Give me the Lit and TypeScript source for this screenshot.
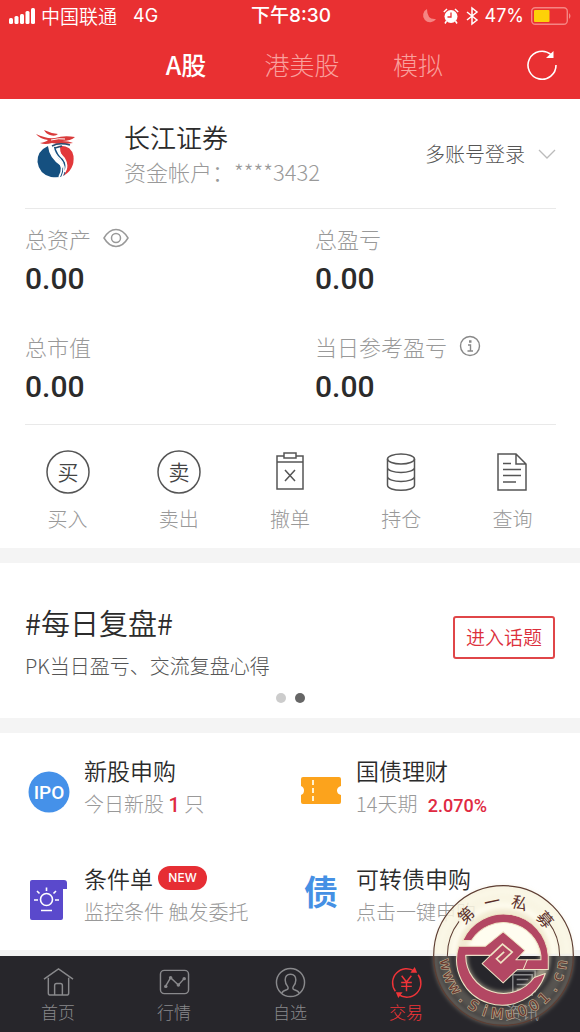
import { LitElement, html, css, svg } from "lit";
import { customElement, state } from "lit/decorators.js";

const actionIcons: Record<string, unknown> = {
  buy: svg`<circle cx="22" cy="22" r="21"/><text class="glyph" x="22" y="30" text-anchor="middle">买</text>`,
  sell: svg`<circle cx="22" cy="22" r="21"/><text class="glyph" x="22" y="30" text-anchor="middle">卖</text>`,
  cancel: svg`<path d="M16 6H9V39H35V6H28M9 12H35M16 3H28V8H16ZM17 20L27 31M27 20L17 31"/>`,
  hold: svg`<ellipse cx="22" cy="9" rx="13.500" ry="5"/><path d="M8.500 9V35C8.500 42 35.500 42 35.500 35V9M8.500 17.500C8.500 24 35.500 24 35.500 17.500M8.500 26.500C8.500 33 35.500 33 35.500 26.500"/>`,
  query: svg`<path d="M8 4H26L36 14V40H8ZM26 4V14H36M13 13.500H21M13 19.500H31M13 25.500H31M13 32H26"/>`,
};

const navIcons: Record<string, unknown> = {
  home: svg`<path d="M1 12.500L16 2L31 12.500M5.500 11V27Q5.500 29 8 29H24Q26.500 29 26.500 27V11M12 29V19Q12 17 14 17H18Q20 17 20 19V29"/>`,
  chart: svg`<rect x="1.500" y="3.500" width="29" height="24" rx="4"/><path d="M7 19.500L12 11L20 18.500L26 12"/><g class="dot"><circle cx="7" cy="20" r="1.800"/><circle cx="12" cy="11" r="1.800"/><circle cx="20" cy="18.500" r="1.800"/><circle cx="26" cy="12" r="1.800"/></g>`,
  user: svg`<circle cx="16" cy="16" r="14.500"/><path d="M7 27Q8 24.500 12 23.500Q14.500 22.500 13 20Q10.500 17 10.500 13.500Q10.500 7.500 16 7.500Q21.500 7.500 21.500 13.500Q21.500 17 19 20Q17.500 22.500 20 23.500Q24 24.500 25 27"/>`,
  trade: svg`<path d="M24.500 4.500A14.500 14.500 0 0 0 4.500 25M8 28.500A14.500 14.500 0 0 0 28 8M11 9L16 15.500L21 9M10.500 16H21.500M10.500 20H21.500M16 15.500V25"/><path class="dot" d="M20 6H27L24.500 0ZM5 26H12L7.500 32Z"/>`,
  news: svg`<path d="M6 8H26V29H6ZM9 4H29V26M10 13H22M10 18H22M10 23H18"/>`,
};

@customElement("trade-watermark")
class TradeWatermark extends LitElement {
  static styles = css`
    :host { display: block; pointer-events: none; }
    svg { display: block; width: 100%; height: auto; overflow: visible; }
    .cn { font: 400 48px "Noto Sans CJK SC", sans-serif; fill: #5b2f2a; }
    .url { font: 400 44px "DejaVu Sans", sans-serif; fill: #6a3a30; stroke: #b9a98c; stroke-width: 4; paint-order: stroke; }
  `;

  /* Letters stand evenly spaced on the lower half of the ring, tops towards its centre. */
  private url() {
    const letters = [..."www.SiMu001.cn"];
    const step = 162 / (letters.length - 1);
    return letters.map((c, i) => {
      const angle = 81 - i * step;
      return svg`<text text-anchor="middle" transform="translate(251 258) rotate(${angle.toFixed(1)})" y="190">${c}</text>`;
    });
  }

  private name() {
    const marks: [string, number][] = [["第", -43], ["一", -12], ["私", 17], ["募", 49]];
    return marks.map(([c, a]) => svg`<text text-anchor="middle" transform="translate(251 258) rotate(${a})" y="-147">${c}</text>`);
  }

  render() {
    return html`<svg viewBox="40 47 422 422" aria-hidden="true">
      <defs>
        <filter id="soft" x="-20%" y="-20%" width="140%" height="140%"><feGaussianBlur stdDeviation="7"/></filter>
        <clipPath id="top"><rect x="30" y="40" width="440" height="213"/></clipPath>
      </defs>
      <g clip-path="url(#top)"><circle cx="251" cy="258" r="210" fill="#fffcec" opacity=".8"/></g>
      <g fill="none" stroke="#e9dfc0" filter="url(#soft)">
        <circle cx="251" cy="258" r="204" stroke-width="12" opacity=".4"/>
        <circle cx="251" cy="258" r="174" stroke-width="36" opacity=".25"/>
        <circle cx="251" cy="258" r="125" stroke-width="32" opacity=".6"/>
      </g>
      <circle cx="251" cy="258" r="209" fill="none" stroke="#5d3d32" stroke-width="3.500"/>
      <path d="M83 262A168 168 0 0 1 118 156M384 156A168 168 0 0 1 419 262" fill="none" stroke="#5d3d32" stroke-width="3"/>
      <g fill="#b34763" stroke="#efe4c5" stroke-width="3" stroke-linejoin="round">
        <path d="M129 213A134 134 0 0 1 385 258V300H300L322 271H363V258A113 113 0 0 0 155 213Z"/>
        <path d="M117 230H197L250 187L315 243L288 271H322L310 300H292L250 340L187 282L213 257H138A113 113 0 0 0 343 324L376 312A134 134 0 0 1 117 230Z"/>
      </g>
      <path d="M213 257L248 224L277 248L243 280L230 268L253 247" fill="none" stroke="#efe4c5" stroke-width="5"/>
      <g class="cn">${this.name()}</g>
      <g class="url">${this.url()}</g>
    </svg>`;
  }
}

@customElement("app-root")
class AppRoot extends LitElement {
  @state() private tab = 0;

  static styles = css`
    :host {
      display: flex; flex-direction: column; position: relative;
      min-height: 100vh; background: #fff; color: #2b2b2b; overflow: hidden;
      font: 300 20px/30px "Noto Sans CJK SC", sans-serif;
    }
    * { box-sizing: border-box; }
    button { font: inherit; color: inherit; background: none; border: 0; padding: 0; margin: 0; cursor: pointer; }
    a { color: inherit; text-decoration: none; }
    svg { display: block; flex: none; overflow: visible; }
    h2, p, dl, dd, dt { margin: 0; font-weight: inherit; font-size: inherit; }
    header { background: #e93032; color: #fff; height: 99px; }
    .status { display: grid; grid-template-columns: 1fr auto 1fr; align-items: center; height: 32px; padding: 0 7px 0 9px; font-size: 18px; line-height: 32px; font-weight: 400; }
    .status div { display: flex; align-items: center; }
    .carrier { gap: 5px; }
    .carrier span { margin-right: 11px; font-size: 19px; font-weight: 350; }
    .latin { font-family: Inter, sans-serif; font-weight: 400; }
    .clock { font: 500 19px/32px Inter, "Noto Sans CJK SC", sans-serif; }
    .battery { justify-content: flex-end; gap: 7px; font-family: Inter, sans-serif; }
    .tabs { display: grid; grid-template-columns: 1fr auto 1fr; align-items: center; height: 66px; padding: 0 23px 0 47px; }
    .tabset { display: grid; grid-template-columns: repeat(3, 116px); grid-column: 2; }
    .tab { font-size: 25px; line-height: 38px; padding-bottom: 2px; color: #f9a09d; }
    .tab.on { color: #fff; font-weight: 500; }
    .refresh { justify-self: end; }

    .account { display: flex; align-items: center; margin: 0 24px 0 25px; height: 110px; border-bottom: 1px solid #e9e9e9; }
    .logo { margin-left: 10px; width: 42px; height: 50px; }
    .who { flex: 1; margin-left: 47px; line-height: 35px; color: #999; font-size: 22px; }
    .who h2 { font-size: 26px; color: #2b2b2b; font-weight: 350; }
    .switch { display: flex; align-items: center; gap: 13px; color: #555; }

    .assets { display: grid; grid-template-columns: 290fr 241fr; row-gap: 28px; margin: 0 24px 0 25px; padding: 9px 0 18px; border-bottom: 1px solid #e9e9e9; }
    .assets dt { display: flex; align-items: center; gap: 12px; height: 40px; line-height: 38px; font-size: 22px; color: #999; }
    .assets dd { height: 40px; font: 500 30px/42px Roboto, sans-serif; }

    .actions { display: grid; grid-template-columns: repeat(5, 1fr); padding: 25px 12px 14px; }
    .action { display: grid; justify-items: center; gap: 10px; color: #999; }
    .action svg { fill: none; stroke: #555; stroke-width: 1.500; }
    .action .glyph { font-size: 21px; fill: #444; stroke: none; font-weight: 350; }
    .band { height: 15px; background: #f4f4f4; flex: none; }

    .topic { display: grid; grid-template-columns: 1fr auto; align-items: center; padding: 38px 25px 15px; }
    .topic h2 { font-size: 29px; line-height: 42px; font-weight: 350; }
    .topic p { line-height: 30px; margin-top: 8px; color: #555; }
    .enter { width: 102px; height: 43px; border: 2px solid #e04648; border-radius: 3px; color: #dc2f3c; font-size: 19px; line-height: 38px; font-weight: 350; margin-top: -8px; }
    .dots { grid-column: 1 / -1; display: flex; justify-content: center; gap: 9px; margin-top: 12px; }
    .dots i { width: 10px; height: 10px; border-radius: 50%; background: #ccc; }
    .dots i.on { background: #666; }

    .services { display: grid; grid-template-columns: 272fr 308fr; row-gap: 40px; padding: 21px 0 20px; }
    .service { display: grid; grid-template-columns: 42px auto; align-items: center; justify-content: start; column-gap: 14px; padding-left: 28px; }
    .service > svg { margin-top: 8px; }
    .service p { line-height: 36px; color: #999; white-space: nowrap; }
    .service h2 { display: flex; align-items: center; gap: 5px; font-size: 23px; line-height: 32px; white-space: nowrap; font-weight: 350; }
    .badge { width: 49px; height: 24px; border-radius: 12px; background: #e62e34; color: #fff; font: 500 12px/24px Inter, sans-serif; text-align: center; }
    .hot { color: #e02a42; font: 500 20px/30px Roboto, sans-serif; }
    .rate { margin-left: 6px; font-size: 18px; }
    .ipo { font: 500 19px Roboto, sans-serif; fill: #fff; }
    .debt { font: 700 34px "Noto Sans CJK SC", sans-serif; fill: #4590e4; }

    nav { display: grid; grid-template-columns: repeat(5, 1fr); background: #27262b; height: 76px; }
    .foot { height: 6px; background: #f2f2f2; margin-top: auto; }
    .item { display: flex; flex-direction: column; align-items: center; padding-top: 11px; color: #89898c; font-size: 17px; line-height: 26px; gap: 1px; }
    .item svg { fill: none; stroke: currentColor; stroke-width: 1.500; }
    .item .dot { fill: currentColor; stroke: none; }
    .item.on { color: #ef3438; }
    .mark { position: absolute; right: 6px; bottom: 6px; width: 141px; }
  `;

  private asset(label: string, icon: unknown = null) {
    return html`<div><dt>${label}${icon}</dt><dd>0.00</dd></div>`;
  }

  private service(icon: unknown, title: unknown, note: unknown) {
    return html`<a class="service" href="#"><svg width="42" height="42" viewBox="0 0 42 42">${icon}</svg><div><h2>${title}</h2><p>${note}</p></div></a>`;
  }

  render() {
    const actions = [["buy", "买入"], ["sell", "卖出"], ["cancel", "撤单"], ["hold", "持仓"], ["query", "查询"]];
    const nav = [["home", "首页"], ["chart", "行情"], ["user", "自选"], ["trade", "交易"], ["news", "资讯"]];
    return html`
      <header>
        <div class="status">
          <div class="carrier">
            <svg width="27" height="16" viewBox="0 0 27 16" fill="#fff"><rect y="10" width="4" height="6" rx="1.500"/><rect x="5.500" y="8" width="4" height="8" rx="1.500"/><rect x="11" y="6" width="4" height="10" rx="1.500"/><rect x="16.500" y="3" width="4" height="13" rx="1.500"/><rect x="22" width="4" height="16" rx="1.500"/></svg>
            <span>中国联通</span><b class="latin">4G</b>
          </div>
          <div class="clock">下午8:30</div>
          <div class="battery">
            <svg width="14" height="16" viewBox="0 0 14 16"><path fill="#f58583" d="M5 1A7 7 0 1 0 14 11Q5 12 5 1Z"/></svg>
            <svg width="16" height="16" viewBox="0 0 16 16"><circle cx="8" cy="8.500" r="6.500" fill="#fff"/><path d="M8 4.500V9H4.500" fill="none" stroke="#e93032" stroke-width="1.300"/><path d="M.8 4L4 1M15.200 4L12 1M3.500 13L2 15.500M12.500 13L14 15.500" stroke="#fff" stroke-width="1.500"/></svg>
            <svg width="12" height="18" viewBox="0 0 12 18"><path d="M1 5L11 13L6 17V1L11 5L1 13" fill="none" stroke="#fff" stroke-width="1.500"/></svg>
            <span>47%</span>
            <svg width="42" height="18" viewBox="0 0 42 18"><rect x=".7" y=".7" width="35.600" height="16.600" rx="3.500" fill="none" stroke="#f58583" stroke-width="1.400"/><rect x="3" y="3" width="15.500" height="12" rx="1" fill="#fdd108"/><path d="M38 6Q41 9 38 12Z" fill="#f58583"/></svg>
          </div>
        </div>
        <div class="tabs">
          <div class="tabset" role="tablist">
            ${["A股", "港美股", "模拟"].map((t, i) => html`<button role="tab" aria-selected=${i === this.tab} class="tab ${i === this.tab ? "on" : ""}" @click=${() => (this.tab = i)}>${t}</button>`)}
          </div>
          <button class="refresh" aria-label="刷新"><svg width="30" height="32" viewBox="0 0 30 32"><path d="M24 5.500A14 14 0 1 0 29 16" fill="none" stroke="#fff" stroke-width="1.600"/><path d="M26.500 2V9H19Z" fill="#fff"/></svg></button>
        </div>
      </header>

      <section class="account">
        <svg class="logo" viewBox="0 0 42 50">
          <path fill="#155080" d="M13 17Q2 22 2.500 33Q4 45 16 48Q24 49 28 47Q31 42 26 37Q14 29 13 17Z"/>
          <path fill="#e2383b" d="M22 17Q36 15 38.500 27Q40 41 27 47.500Q36 38 30 31Q25 26 25 18Z"/>
          <path fill="none" stroke="#155080" stroke-width="2.500" d="M19 18Q21 26 27 31Q32 37 28 46"/>
          <path fill="none" stroke="#fff" stroke-width="1.500" d="M14 16Q16 26 22 31Q30 38 24 48M18 17Q19 25 25 30Q32 37 27 48M22 18Q23 23 29 29Q33 35 30 43"/>
          <path fill="#d93b3b" d="M1 5Q11 10 20 9Q29 6 40 8Q36 12 27 12Q34 12 38 14Q26 16 17 14Q10 16 5 14Q11 13 13 11Q5 10 1 5ZM9 1Q15 4 23 5Q20 8 15 6Q11 5 9 1Z"/>
          <path fill="none" stroke="#fff" stroke-width="1" d="M16 11Q24 9 30 10"/>
          <path fill="none" stroke="#254d70" stroke-width="1.500" d="M17 17Q24 13 35 16M20 19L27 17"/>
        </svg>
        <div class="who"><h2>长江证券</h2><p>资金帐户：****3432</p></div>
        <button class="switch">多账号登录<svg width="18" height="12" viewBox="0 0 18 12"><path d="M1 2L9 10L17 2" fill="none" stroke="#bbb" stroke-width="1.300"/></svg></button>
      </section>

      <dl class="assets">
        ${this.asset("总资产", html`<button aria-label="显示或隐藏"><svg width="26" height="20" viewBox="0 0 26 20" fill="none" stroke="#999" stroke-width="1.500"><path d="M1 10Q6 1.500 13 1.500T25 10Q20 18.500 13 18.500T1 10Z"/><circle cx="13" cy="10" r="4.500"/></svg></button>`)}
        ${this.asset("总盈亏")}
        ${this.asset("总市值")}
        ${this.asset("当日参考盈亏", html`<button aria-label="说明"><svg width="22" height="22" viewBox="0 0 22 22" fill="none" stroke="#888" stroke-width="1.400"><circle cx="11" cy="11" r="9.500"/><path d="M9 10H11.500V16M8.500 16H14M10 6H12.500M10 7H12.500"/></svg></button>`)}
      </dl>

      <div class="actions">
        ${actions.map(([k, t]) => html`<button class="action"><svg width="44" height="44" viewBox="0 0 44 44">${actionIcons[k]}</svg>${t}</button>`)}
      </div>
      <div class="band"></div>

      <section class="topic">
        <div><h2>#每日复盘#</h2><p>PK当日盈亏、交流复盘心得</p></div>
        <button class="enter">进入话题</button>
        <div class="dots"><i></i><i class="on"></i></div>
      </section>
      <div class="band"></div>

      <section class="services">
        ${this.service(svg`<circle cx="21" cy="21" r="20.500" fill="#4591e9"/><text class="ipo" x="21" y="27.500" text-anchor="middle">IPO</text>`, "新股申购", html`今日新股 <span class="hot">1</span> 只`)}
        ${this.service(svg`<path fill="#fca31c" d="M3 6H39Q41 6 41 8V15Q37 16 37 19.500T41 24V31Q41 33 39 33H3Q1 33 1 31V24Q4 23 4 19.500T1 15V8Q1 6 3 6Z"/><path d="M13 9V31" stroke="#fff2cf" stroke-width="2" stroke-dasharray="5 3"/>`, "国债理财", html`14天期 <span class="hot rate">2.070%</span>`)}
        ${this.service(svg`<path fill="#5a49cc" d="M4 1H36Q39 1 39 4V10H35V39Q35 41 33 41H4Q2 41 2 39V3Q2 1 4 1Z"/><g fill="none" stroke="#fff" stroke-width="1.600"><circle cx="18.500" cy="20.500" r="6"/><path d="M13 31.500H24M18.500 8.500V12M9 12L11.500 14.500M28 12L25.500 14.500M6 21H10M27 21H31"/></g>`, html`条件单<span class="badge">NEW</span>`, "监控条件 触发委托")}
        ${this.service(svg`<text class="debt" x="21" y="26" text-anchor="middle">债</text>`, "可转债申购", "点击一键申购")}
      </section>

      <div class="foot"></div>
      <nav>
        ${nav.map(([k, t]) => html`<a href="#" class="item ${k === "trade" ? "on" : ""}"><svg width="31" height="31" viewBox="0 0 32 32">${navIcons[k]}</svg>${t}</a>`)}
      </nav>
      <trade-watermark class="mark"></trade-watermark>
    `;
  }
}
